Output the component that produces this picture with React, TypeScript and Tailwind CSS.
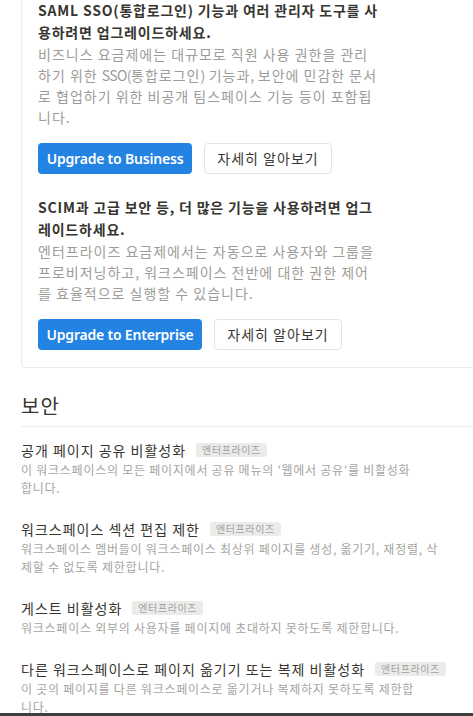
import React from "react";

const font = { fontFamily: '"Noto Sans CJK KR", "Noto Sans", sans-serif' };
const latin = { fontFamily: '"Noto Sans", "Noto Sans CJK KR", sans-serif' };

function Badge() {
  return (
    <span className="ml-[10px] inline-flex h-[14px] items-center rounded-[3px] bg-[#ebebea] px-[6px] text-[10px] leading-none tracking-[0.6px] text-[#a3a29f]">
      엔터프라이즈
    </span>
  );
}

function Item({ title, desc, w }: { title: string; desc: string; w: string }) {
  return (
    <div className="mb-[22px]">
      <div className="flex items-center text-[14px] leading-[20px] tracking-[1px] text-[#37352f]">
        <span>{title}</span>
        <Badge />
      </div>
      <div className={`mt-[1px] ${w} text-[12px] leading-[18px] tracking-[0.75px] text-[#a5a4a1]`}>{desc}</div>
    </div>
  );
}

function Upgrade({
  heading,
  body,
  cta,
  ctaW,
  last,
}: {
  heading: string;
  body: React.ReactNode;
  cta: string;
  ctaW: string;
  last?: boolean;
}) {
  return (
    <div className={last ? "" : "mb-[22px]"}>
      <div className="w-[342px] text-[14px] font-semibold leading-[22px] tracking-[0.8px] text-[#37352f]">{heading}</div>
      <div className="mt-[1px] w-[342px] text-[14px] leading-[21px] tracking-[1px] text-[#9d9c99]">{body}</div>
      <div className="mt-[15px] flex gap-[12px]">
        <button
          className={`h-[31px] ${ctaW} rounded-[4px] bg-[#2383e2] text-[14px] font-semibold tracking-[-0.2px] text-white`}
          style={latin}
        >
          {cta}
        </button>
        <button className="h-[31px] w-[128px] rounded-[4px] border border-[#e3e3e1] bg-white text-[14px] tracking-[1px] text-[#37352f]">
          자세히 알아보기
        </button>
      </div>
    </div>
  );
}

export default function App() {
  return (
    <div className="relative h-[716px] w-[473px] overflow-hidden bg-white" style={font}>
      <div className="w-[600px] pl-[21px]">
        <div className="-mt-[18px] rounded-[4px] border border-[#ececea] pb-[17px] pl-[16px] pt-[16px]">
          <Upgrade
            heading="SAML SSO(통합로그인) 기능과 여러 관리자 도구를 사용하려면 업그레이드하세요."
            body={
              <span>
                비즈니스 요금제에는 대규모로 직원 사용 권한을 관리하기 위한{" "}
                <span className="tracking-[-0.6px]">SSO(</span>통합로그인<span className="tracking-[-0.6px]">)</span>{" "}
                기능과<span className="tracking-[-0.6px]">,</span> 보안에 민감한 문서로 협업하기 위한 비공개
                팀스페이스 기능 등이 포함됩니다.
              </span>
            }
            cta="Upgrade to Business"
            ctaW="w-[154px]"
          />
          <Upgrade
            heading="SCIM과 고급 보안 등, 더 많은 기능을 사용하려면 업그레이드하세요."
            body="엔터프라이즈 요금제에서는 자동으로 사용자와 그룹을 프로비저닝하고, 워크스페이스 전반에 대한 권한 제어를 효율적으로 실행할 수 있습니다."
            cta="Upgrade to Enterprise"
            ctaW="w-[164px]"
            last
          />
        </div>

        <div className="mt-[23px] text-[20px] leading-[30px] tracking-[1px] text-[#37352f]">보안</div>
        <div className="mt-[5px] h-px bg-[#ececea]" />
        <div className="mt-[13px]">
          <Item
            title="공개 페이지 공유 비활성화"
            desc="이 워크스페이스의 모든 페이지에서 공유 메뉴의 '웹에서 공유'를 비활성화합니다."
            w="w-[396px]"
          />
          <Item
            title="워크스페이스 섹션 편집 제한"
            desc="워크스페이스 멤버들이 워크스페이스 최상위 페이지를 생성, 옮기기, 재정렬, 삭제할 수 없도록 제한합니다."
            w="w-[418px]"
          />
          <Item
            title="게스트 비활성화"
            desc="워크스페이스 외부의 사용자를 페이지에 초대하지 못하도록 제한합니다."
            w="w-[418px]"
          />
          <Item
            title="다른 워크스페이스로 페이지 옮기기 또는 복제 비활성화"
            desc="이 곳의 페이지를 다른 워크스페이스로 옮기거나 복제하지 못하도록 제한합니다."
            w="w-[404px]"
          />
        </div>
      </div>
      <div className="absolute bottom-0 left-0 h-[3px] w-full bg-[#3e3e3e]" />
    </div>
  );
}
